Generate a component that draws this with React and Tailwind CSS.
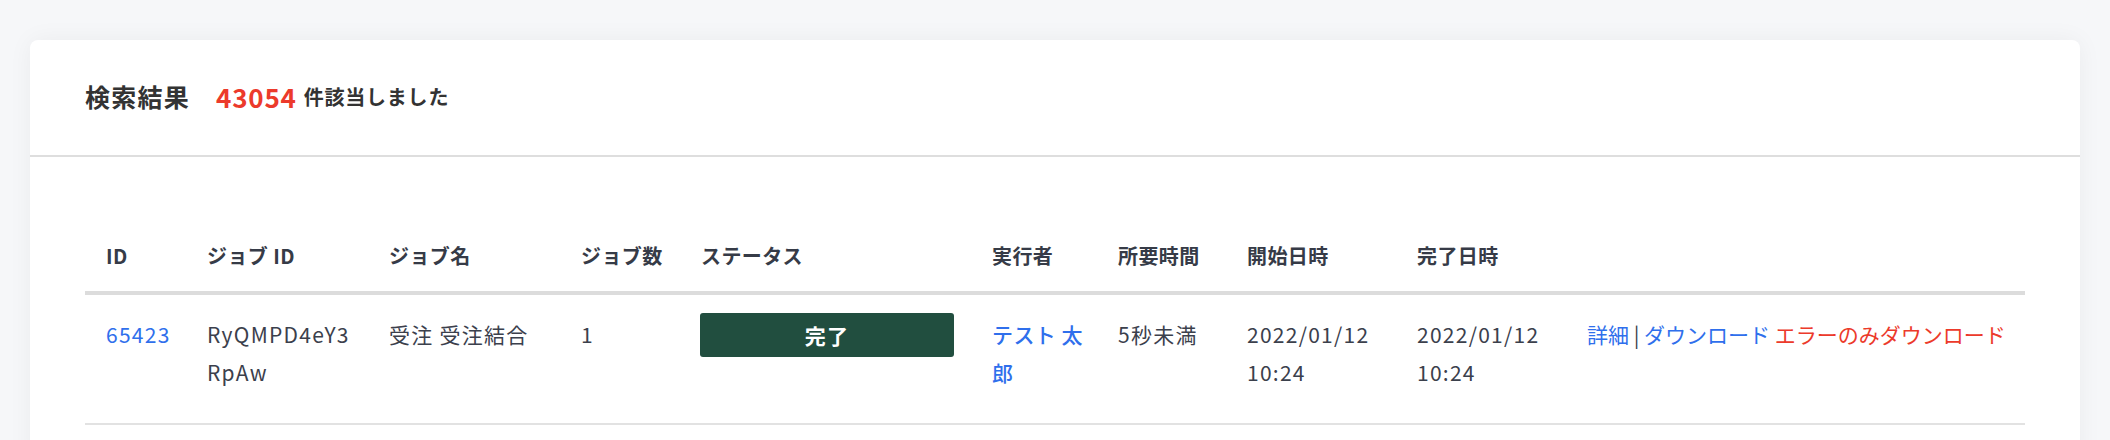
const columns = [
  'ID',
  'ジョブ ID',
  'ジョブ名',
  'ジョブ数',
  'ステータス',
  '実行者',
  '所要時間',
  '開始日時',
  '完了日時',
  '',
];

const jobs = [
  {
    id: '65423',
    jobId: 'RyQMPD4eY3RpAw',
    name: '受注 受注結合',
    count: 1,
    status: '完了',
    user: 'テスト 太郎',
    duration: '5秒未満',
    startedAt: '2022/01/12 10:24',
    finishedAt: '2022/01/12 10:24',
  },
];

const gridCols =
  'grid grid-cols-[101px_182px_192px_120px_291px_126px_129px_170px_170px_1fr]';

function JobRow({ job }) {
  return (
    <div className={`${gridCols} border-b-2 border-[#e2e2e2] text-[21px] leading-[38px] tracking-[0.06em] text-[#3b404c]`}>
      <div className="px-[21px] pt-[20px] pb-[32px]">
        <a href="#" className="text-[#2f6fec]">{job.id}</a>
      </div>
      <div className="pl-[21px] pr-[12px] pt-[20px] pb-[32px] break-all">{job.jobId}</div>
      <div className="px-[21px] pt-[20px] pb-[32px]">{job.name}</div>
      <div className="px-[21px] pt-[20px] pb-[32px]">{job.count}</div>
      <div className="pl-[20px] pr-[17px] pt-[18px]">
        <div className="flex h-[44px] w-[254px] items-center justify-center rounded-[3px] bg-[#214e3f] text-[21px] font-bold text-white">
          {job.status}
        </div>
      </div>
      <div className="pl-[21px] pr-[6px] pt-[20px] pb-[32px] tracking-[0.02em]">
        <a href="#" className="font-medium text-[#2f6fec]">{job.user}</a>
      </div>
      <div className="px-[21px] pt-[20px] pb-[32px]">{job.duration}</div>
      <div className="px-[21px] pt-[20px] pb-[32px]">{job.startedAt}</div>
      <div className="px-[21px] pt-[20px] pb-[32px]">{job.finishedAt}</div>
      <div className="px-[21px] pt-[20px] pb-[32px] whitespace-nowrap tracking-normal">
        <a href="#" className="text-[#2f6fec]">詳細</a>
        <span className="text-[#3b404c]"> | </span>
        <a href="#" className="text-[#2f6fec]">ダウンロード</a>{' '}
        <a href="#" className="text-[#ec3a2b]">エラーのみダウンロード</a>
      </div>
    </div>
  );
}

export default function App() {
  return (
    <div className="min-h-screen bg-[#f6f7f9] px-[30px] pt-[40px] font-['Noto_Sans_CJK_JP','Noto_Sans',sans-serif]">
      <div className="rounded-[8px] bg-white shadow-[0_0_24px_rgba(0,0,0,0.05)]">
        {/* summary */}
        <div className="flex h-[117px] items-center border-b-2 border-[#dedede] px-[55px] pb-[2px]">
          <h2 className="text-[25px] font-bold tracking-[0.05em] text-[#333333]">検索結果</h2>
          <span className="ml-[26px] text-[26px] font-bold tracking-[0.03em] text-[#ec3a2b]">43054</span>
          <span className="ml-[7px] text-[20px] font-bold tracking-[0.04em] text-[#333333]">件該当しました</span>
        </div>

        <div className="px-[55px] pt-[56px] pb-[40px]">
          <div className={`${gridCols} border-b-4 border-[#dcdcdc] text-[20px] font-bold leading-[38px] tracking-[0.02em] text-[#363b47]`}>
            {columns.map((col, i) => (
              <div key={i} className="px-[21px] pt-[24px] pb-[16px] whitespace-nowrap">
                {col}
              </div>
            ))}
          </div>
          {jobs.map(job => (
            <JobRow key={job.id} job={job} />
          ))}
        </div>
      </div>
    </div>
  );
}
